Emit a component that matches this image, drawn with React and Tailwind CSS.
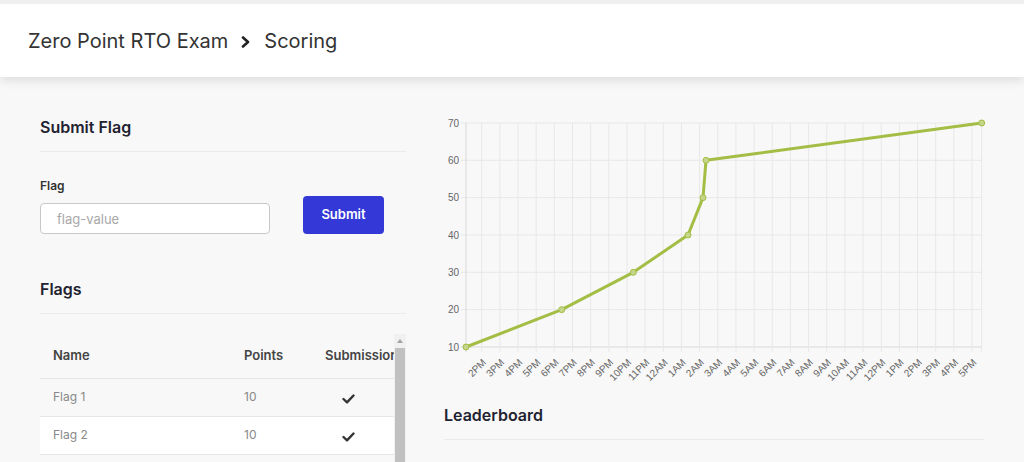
import React from 'react';

const FONT = { fontFamily: 'Inter, "Noto Sans", sans-serif' };

const Y_TICKS = [70, 60, 50, 40, 30, 20, 10];
const HOURS = [
  '2PM', '3PM', '4PM', '5PM', '6PM', '7PM', '8PM', '9PM', '10PM', '11PM', '12AM',
  '1AM', '2AM', '3AM', '4AM', '5AM', '6AM', '7AM', '8AM', '9AM', '10AM', '11AM',
  '12PM', '1PM', '2PM', '3PM', '4PM', '5PM',
];

// chart geometry (svg coords)
const X0 = 22;
const X1 = 537.7;
const yFor = (v) => 237 - ((v - 10) / 60) * 224;
const hourX = (i) => 37.7 + i * 18.16;

const POINTS = [
  [22, 10],
  [117.7, 20],
  [189.3, 30],
  [244, 40],
  [259, 50],
  [262, 60],
  [537.7, 70],
];

function ScoreChart() {
  const line = POINTS.map(([x, v]) => `${x},${yFor(v)}`).join(' ');
  return (
    <svg width="540" height="280" className="block overflow-visible" style={{ fontFamily: '"Liberation Sans", Arial, sans-serif' }}>
      {Y_TICKS.map((v) => (
        <g key={v}>
          <line x1={17} x2={X1} y1={yFor(v)} y2={yFor(v)} stroke={v === 10 ? '#d9d9d9' : '#e8e8e8'} strokeWidth="1" />
          <text x={15} y={yFor(v) + 3.5} textAnchor="end" fontSize="10" fill="#666">{v}</text>
        </g>
      ))}
      <line x1={X0} x2={X0} y1={13} y2={242} stroke="#d9d9d9" strokeWidth="1" />
      {HOURS.map((h, i) => (
        <g key={i}>
          <line x1={hourX(i)} x2={hourX(i)} y1={13} y2={242} stroke="#e8e8e8" strokeWidth="1" />
          <text
            x={0}
            y={0}
            textAnchor="end"
            fontSize="10"
            fill="#666"
            transform={`translate(${hourX(i) + 5} 253) rotate(-45)`}
          >
            {h}
          </text>
        </g>
      ))}
      <line x1={X1} x2={X1} y1={13} y2={242} stroke="#e8e8e8" strokeWidth="1" />
      <polyline points={line} fill="none" stroke="#a3bd45" strokeWidth="3" strokeLinejoin="round" />
      {POINTS.map(([x, v], i) => (
        <circle key={i} cx={x} cy={yFor(v)} r="3" fill="#c5d68a" stroke="#a3bd45" strokeWidth="1" />
      ))}
    </svg>
  );
}

function SectionTitle({ children, className = '' }) {
  return (
    <h2 className={`text-base leading-6 font-semibold text-[#1f2230] pb-3 border-b border-[#ebebeb] ${className}`}>
      {children}
    </h2>
  );
}

function Check() {
  return (
    <svg width="13" height="10" viewBox="0 0 13 10" className="inline-block">
      <polyline points="1.5,5 5,8.3 11.5,1.5" fill="none" stroke="#333" strokeWidth="2.4" strokeLinecap="round" strokeLinejoin="round" />
    </svg>
  );
}

const flags = [
  { name: 'Flag 1', points: 10, done: true },
  { name: 'Flag 2', points: 10, done: true },
];

export default function App() {
  return (
    <div className="min-h-screen bg-[#f8f8f8] border-t-4 border-[#f0f0f0] overflow-hidden" style={FONT}>
      <header className="h-[73px] bg-white flex items-center pl-7 pt-px shadow-[0_3px_10px_rgba(0,0,0,0.12)] relative z-10">
        <span className="text-[20px] text-[#333]">Zero Point RTO Exam</span>
        <svg width="10" height="12" viewBox="0 0 10 12" className="mx-[13px] mt-[1px]">
          <polyline points="2,1.5 7,6 2,10.5" fill="none" stroke="#222" strokeWidth="2.6" strokeLinecap="round" strokeLinejoin="round" />
        </svg>
        <span className="text-[20px] text-[#333]">Scoring</span>
      </header>

      <main className="grid grid-cols-[366px_540px] gap-[38px] px-10 pt-[33px]">
        <div>
          <SectionTitle className="mt-[5px]">Submit Flag</SectionTitle>

          <div className="flex items-end mt-[26px]">
            <div>
              <label className="block text-xs leading-4 font-semibold text-[#333] mb-[9px]">Flag</label>
              <input
                type="text"
                placeholder="flag-value"
                className="w-[230px] h-[31px] px-4 text-[13px] bg-white border border-[#c8c8c8] rounded placeholder:text-[#a8a8a8] outline-none"
              />
            </div>
            <button className="ml-[33px] w-[81px] h-[38px] bg-[#3438d6] text-white text-[13px] font-semibold rounded">
              Submit
            </button>
          </div>

          <SectionTitle className="mt-[43px]">Flags</SectionTitle>

          <div className="flex mt-5 h-[140px]">
            <div className="w-[354px] overflow-hidden">
              <table className="w-[380px] text-left border-collapse">
                <thead>
                  <tr className="h-[44px] border-b border-[#e6e6e6]">
                    <th className="pl-[13px] w-[191px] text-[13px] font-semibold text-[#444]">Name</th>
                    <th className="pl-[13px] w-[81px] text-[13px] font-semibold text-[#444]">Points</th>
                    <th className="pl-[13px] text-[13px] font-semibold text-[#444] whitespace-nowrap">Submission</th>
                  </tr>
                </thead>
                <tbody>
                  {flags.map((f, i) => (
                    <tr key={f.name} className={`h-[38px] border-b border-[#e6e6e6] ${i % 2 === 1 ? 'bg-white' : 'bg-[#f8f8f8]'}`}>
                      <td className="pl-[13px] text-xs text-[#888]">{f.name}</td>
                      <td className="pl-[13px] text-xs text-[#888]">{f.points}</td>
                      <td className="pl-[30px]">{f.done && <Check />}</td>
                    </tr>
                  ))}
                </tbody>
              </table>
            </div>
            <div className="w-[12px] bg-[#f1f1f1] flex flex-col items-center">
              <div className="h-[14px] flex items-center justify-center">
                <div className="w-0 h-0 border-l-[3px] border-r-[3px] border-b-[4px] border-l-transparent border-r-transparent border-b-[#a3a3a3]" />
              </div>
              <div className="w-[10px] flex-1 bg-[#c1c1c1]" />
            </div>
          </div>
        </div>

        <div>
          <ScoreChart />
          <SectionTitle className="mt-[13px]">Leaderboard</SectionTitle>
        </div>
      </main>
    </div>
  );
}
